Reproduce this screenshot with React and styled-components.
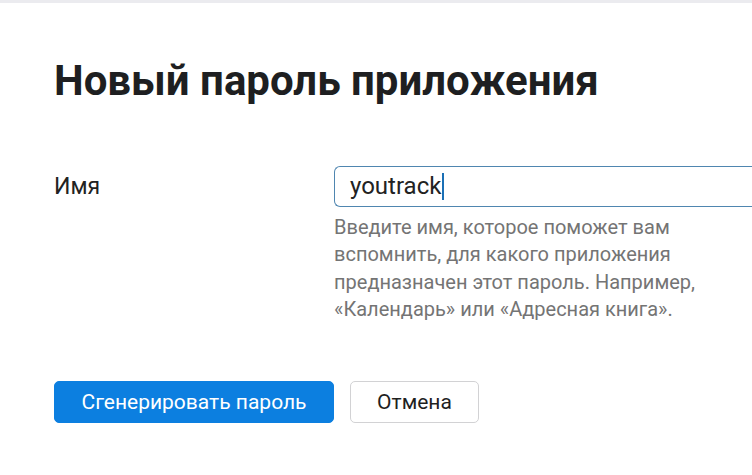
import React from 'react';
import styled, { createGlobalStyle } from 'styled-components';

const Global = createGlobalStyle`
    html, body {
        margin: 0;
        padding: 0;
        background: #ffffff;
        font-family: Roboto, "Noto Sans", Arial, sans-serif;
    }
`;

const Page = styled.div`
    width: 752px;
    height: 475px;
    box-sizing: border-box;
    border-top: 3px solid #ebebef;
    padding: 0 0 0 54px;
    overflow: hidden;
`;

const Title = styled.h1`
    margin: 52px 0 0 0;
    font-size: 42px;
    line-height: 52px;
    font-weight: 700;
    color: #1e1f21;
`;

const FormRow = styled.div`
    display: grid;
    grid-template-columns: 280px 1fr;
    margin-top: 59px;
`;

const Label = styled.label`
    font-size: 23px;
    line-height: 26px;
    color: #222;
    padding-top: 8px;
`;

const Field = styled.div`
    display: flex;
    flex-direction: column;
`;

const Input = styled.div`
    height: 41px;
    box-sizing: border-box;
    border: 1.5px solid #4f86b0;
    border-right: none;
    border-radius: 6px 0 0 6px;
    margin-right: -2px;
    padding: 0 0 1px 15px;
    display: flex;
    align-items: center;
    font-size: 24px;
    color: #222;
`;

const Caret = styled.span`
    display: inline-block;
    width: 2px;
    height: 27px;
    background: #1a6fb5;
    margin-left: 1px;
`;

const Hint = styled.p`
    margin: 7px 0 0 0;
    font-size: 20px;
    line-height: 27.3px;
    color: #747474;
    width: 395px;
`;

const Actions = styled.div`
    display: flex;
    gap: 16px;
    margin-top: 58px;
`;

const Button = styled.button`
    height: 42px;
    box-sizing: border-box;
    padding: 0;
    border-radius: 5px;
    font-family: Roboto, "Noto Sans", Arial, sans-serif;
    font-size: 21px;
    cursor: pointer;
    background: ${p => (p.primary ? '#0c7fe0' : '#ffffff')};
    color: ${p => (p.primary ? '#ffffff' : '#1f1f1f')};
    border: ${p => (p.primary ? '1px solid #0c7fe0' : '1.5px solid #d2d2d4')};
    width: ${p => p.width}px;
`;

export default function App() {
    return (
        <>
            <Global />
            <Page>
                <Title>Новый пароль приложения</Title>
                <FormRow>
                    <Label>Имя</Label>
                    <Field>
                        <Input>youtrack<Caret /></Input>
                        <Hint>
                            Введите имя, которое поможет вам вспомнить, для какого приложения
                            предназначен этот пароль. Например, «Календарь» или «Адресная книга».
                        </Hint>
                    </Field>
                </FormRow>
                <Actions>
                    <Button primary width={280}>Сгенерировать пароль</Button>
                    <Button width={129}>Отмена</Button>
                </Actions>
            </Page>
        </>
    );
}
